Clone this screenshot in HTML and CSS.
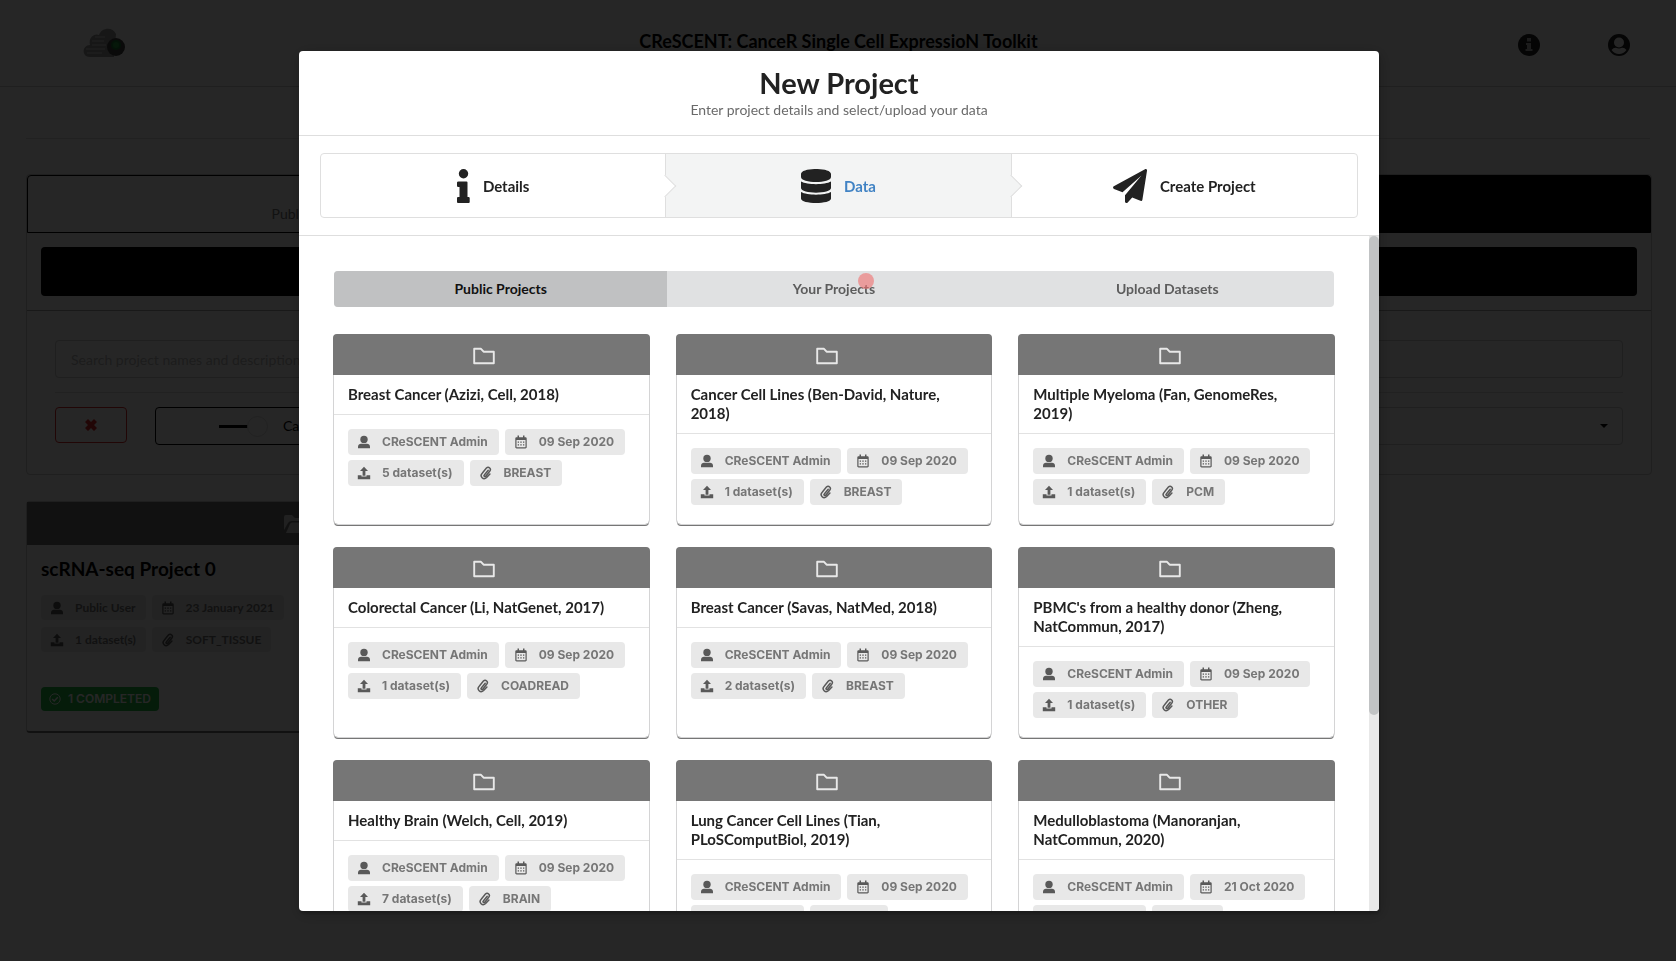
FILE: index.html
```html
<!DOCTYPE html>
<html lang="en">
<head>
<meta charset="utf-8">
<title>CReSCENT - New Project</title>
<link rel="stylesheet" href="styles.css">
</head>
<body>
<svg class="sprite" aria-hidden="true">
  <symbol id="i-user" viewBox="0 0 14 14"><circle cx="7" cy="4.4" r="3.7"/><path d="M1 13.2v-1.4C1 9.9 2.400 8.700 4 8.700h6c1.600 0 3 1.200 3 3.100v1.400z"/></symbol>
  <symbol id="i-cal" viewBox="0 0 14 14"><path fill-rule="evenodd" d="M3.500 .6h1.500v1.600h4V.6h1.500v1.600h.9c.7 0 1.300.5 1.300 1.200v8.900c0 .7-.6 1.200-1.300 1.200H2.600c-.7 0-1.300-.5-1.300-1.200V3.400c0-.7.6-1.200 1.300-1.200h.9zM2.500 5v7.300h9V5z"/><path d="M3.700 6.500H5v1.300H3.700zM6.300 6.500h1.400v1.300H6.300zM9 6.500h1.300v1.300H9zM3.700 9.200H5v1.300H3.700zM6.300 9.200h1.400v1.300H6.300zM9 9.200h1.300v1.300H9z"/></symbol>
  <symbol id="i-up" viewBox="0 0 14 14"><path d="M7 .8l4 4.300H8.400v4.700H5.600V5.100H3z"/><path d="M.8 9.300h3.700v1.300h5V9.300h3.700v4H.8z"/></symbol>
  <symbol id="i-clip" viewBox="0 0 14 14"><path fill="none" stroke="currentColor" stroke-width="1.500" stroke-linecap="round" d="M9.200 4.300L5.300 8.900c-.9 1 .4 2.300 1.400 1.300l4-4.900c2-2.300-1-5.400-3.300-3.300L3.200 7.200c-3 3.200 1.300 7.300 4.400 4.300l3.300-3.400"/></symbol>
  <symbol id="i-folder" viewBox="0 0 24 20"><path fill="none" stroke="currentColor" stroke-width="1.900" stroke-linejoin="round" d="M2.200 2.800h6.800l2.600 2.900h10.200v11.500H2.200z"/></symbol>
</svg>

<div class="page">
  <header class="topbar">
    <svg class="logo" viewBox="0 0 42 30" aria-hidden="true">
      <path fill="#999" d="M7 29C-2 29-1 17 7 17 5 9 12 5 16 7 19-1 30-1 33 6l-2 23z"/>
      <path fill="none" stroke="#ddd" d="M4 25h15M3 21h19M9 17h14M9 13h12M12 9h10"/>
      <circle cx="33" cy="19" r="9" fill="#444"/><circle cx="33" cy="17" r="5" fill="#1d7a35"/><circle cx="33" cy="17" r="3" fill="#2b9e48"/>
    </svg>
    <h1 class="brand">CReSCENT: CanceR Single Cell ExpressioN Toolkit</h1>
    <nav class="tools">
      <button class="tool" aria-label="About"><svg viewBox="0 0 22 22"><circle cx="11" cy="11" r="11"/><path fill="#bbb" d="M9 4h4v3.500H9zM8 9h5v6h1.500v2h-7v-2H9v-4H8z"/></svg></button>
      <button class="tool" aria-label="Account"><svg viewBox="0 0 22 22"><circle cx="11" cy="11" r="11"/><circle cx="11" cy="8.500" r="5" fill="#fff"/><path fill="#fff" d="M3.500 16q2-2.500 4.500-2.200 3 1.200 6 0 2.500-.3 4.500 2.200-3 4-7.500 4t-7.500-4z"/></svg></button>
    </nav>
  </header>
  <div class="strip"></div>
  <section class="panel">
    <div class="switch">
      <button class="half light">Public Projects</button>
      <button class="half dark">Your Projects</button>
    </div>
    <div class="block"><button class="create">Create New Project</button></div>
    <div class="filters">
      <input class="search" type="text" placeholder="Search project names and descriptions" aria-label="Search projects">
      <div class="row">
        <button class="clear" aria-label="Clear filters"><svg viewBox="0 0 12 12"><path d="M3 0l3 3 3-3 3 3-3 3 3 3-3 3-3-3-3 3-3-3 3-3-3-3z"/></svg></button>
        <button class="toggle"><span class="track"><span class="knob"></span></span>Cancer</button>
        <button class="pick" aria-label="Tissue"><span class="caret"></span></button>
      </div>
    </div>
  </section>
  <article class="own">
    <div class="own-top"><svg viewBox="0 0 24 18"><path d="M0 15V2q0-2 2-2h6l3 3h7q2 0 2 2v1H8q-3 0-4 2z"/><path d="M2 18l4-9q.6-1.500 2-1.500h16l-4 9q-.6 1.500-2 1.500z"/></svg></div>
    <div class="own-body">
      <h2 class="own-title">scRNA-seq Project 0</h2>
      <div class="own-tags">
        <span class="tag big"><svg><use href="#i-user"/></svg>Public User</span>
        <span class="tag big"><svg><use href="#i-cal"/></svg>23 January 2021</span>
        <span class="tag big"><svg><use href="#i-up"/></svg>1 dataset(s)</span>
        <span class="tag big"><svg><use href="#i-clip"/></svg>SOFT_TISSUE</span>
      </div>
      <span class="done"><svg viewBox="0 0 12 12"><g fill="none" stroke="currentColor"><circle cx="6" cy="6" r="5.200"/><path stroke-width="1.500" d="M3.200 6l2 2 3.600-3.800"/></g></svg>1 COMPLETED</span>
    </div>
  </article>
</div>

<div class="dimmer">
  <div class="modal" role="dialog" aria-labelledby="modal-title">
    <div class="modal-head">
      <h2 class="modal-title" id="modal-title">New Project</h2>
      <p class="modal-sub">Enter project details and select/upload your data</p>
    </div>
    <div class="steps-wrap">
      <div class="steps">
        <button class="step"><svg class="s-info" viewBox="0 0 13 34"><circle cx="6.500" cy="4.700" r="4.700"/><path d="M1.500 12.500h8q1 0 1 1V28h1q1.200 0 1.200 1v4q0 1-1 1H1q-1 0-1-1v-4q0-1 1-1h1.500V18H1.200Q0 18 0 17v-3.500q0-1 1.500-1z"/></svg>Details</button>
        <button class="step active"><svg class="s-data" viewBox="0 0 30 34"><path d="M0 5C0-1.700 30-1.700 30 5v3c0 6.700-30 6.700-30 0zM0 12.500c6 3.500 24 3.500 30 0V19c0 6.200-30 6.200-30 0zM0 23c6 3.500 24 3.500 30 0v6.500c0 6-30 6-30 0z"/></svg>Data</button>
        <button class="step"><svg class="s-plane" viewBox="0 0 34 34"><path d="M32 .3c1-.6 2.200.2 2 1.400l-4.600 29c-.2 1-1.100 1.500-2 1.100l-8.200-3.400-4.500 5c-1 1.100-2.700.4-2.700-1v-6.200L28.500 6.500 9.500 23.200 1 20c-1.200-.5-1.300-2.100-.2-2.800z"/></svg>Create Project</button>
      </div>
    </div>
    <div class="scroller">
      <div class="content">
        <div class="tabs">
          <button class="tab on">Public Projects</button>
          <button class="tab">Your Projects<span class="pointer"></span></button>
          <button class="tab">Upload Datasets</button>
        </div>
        <div class="cards" id="cards"></div>
      </div>
      <div class="bar"><div class="thumb"></div></div>
    </div>
  </div>
</div>
<script src="cards.js"></script>
</body>
</html>
```
FILE: styles.css
```css
* { box-sizing: border-box; }
html, body { height: 100%; }
body { margin: 0; font: 14px/20px Lato, sans-serif; color: #222; background: #fff; overflow: hidden; }
h1, h2, h3, p { margin: 0; }
button, input { font: inherit; color: inherit; margin: 0; padding: 0; border: 0; background: none; }
svg { fill: currentColor; flex: none; }
.sprite { position: absolute; width: 0; height: 0; }

.page { height: 100%; overflow: hidden; }
.topbar { display: grid; grid-template-columns: 1fr auto 1fr; align-items: center; height: 87px; padding: 0 46px 0 83px; border-bottom: 1px solid #ccc; }
.logo { width: 42px; height: 30px; }
.brand { font-size: 18px; line-height: 24px; color: #000; padding: 0 36px 4px 0; }
.tools { display: flex; justify-content: flex-end; gap: 68px; padding-top: 4px; }
.tool { width: 22px; height: 22px; }
.tool svg { display: block; width: 22px; height: 22px; }
.strip { height: 52px; margin: 0 26px; border-bottom: 1px solid #ddd; }
.panel { margin: 35px 24px 0 26px; border: 1px solid #ccc; border-radius: 4px; }
.switch { display: grid; grid-template-columns: 1fr 1fr; height: 58px; }
.half { padding-top: 20px; border: 1px solid #000; }
.light { padding-left: 30%; text-align: left; color: #777; border-radius: 4px 0 0 0; }
.dark { background: #000; color: #000; border-radius: 0 4px 0 0; }
.block { padding: 14px; border-bottom: 1px solid #aaa; }
.create { display: block; width: 100%; height: 49px; background: #000; border-radius: 4px; }
.filters { padding: 29px 28px; }
.search { display: block; width: 100%; height: 38px; padding: 0 15px; border: 1px solid #ccc; border-radius: 4px; }
.search::placeholder { color: #bbb; opacity: 1; }
.row { display: grid; grid-template-columns: 72px 2fr 3fr; gap: 28px; margin-top: 14px; padding-top: 14px; border-top: 1px solid #ddd; }
.clear { display: grid; place-items: center; height: 36px; border: 1px solid #db2828; border-radius: 4px; color: #db2828; }
.clear svg { width: 12px; height: 12px; }
.toggle { display: flex; align-items: center; gap: 35px; height: 38px; padding-left: 63px; border: 1px solid #000; border-radius: 4px; color: #000; }
.track { position: relative; width: 29px; height: 3px; background: #000; }
.knob { position: absolute; left: 28px; top: -9px; width: 21px; height: 21px; border: 1px solid #ddd; border-radius: 50%; background: #fff; }
.pick { display: flex; justify-content: flex-end; align-items: center; height: 38px; padding-right: 14px; border: 1px solid #ccc; border-radius: 4px; }
.caret { border: 4px solid transparent; border-top-color: #000; border-bottom: 0; }
.own { width: 531px; margin: 26px 0 0 26px; border: 1px solid #ccc; border-bottom: 2px solid #767676; border-radius: 4px; }
.own-top { display: grid; place-items: center; height: 43px; padding-left: 8px; background: #767676; color: #ddd; }
.own-top svg { width: 24px; height: 18px; }
.own-body { padding: 14px 14px 20px; }
.own-title { font-size: 19px; line-height: 20px; color: #000; font-weight: 700; }
.own-tags { display: flex; flex-wrap: wrap; gap: 7px 6px; width: 260px; margin: 16px 0 35px; }
.done { display: inline-flex; align-items: center; gap: 7px; height: 24px; padding: 0 8px; border-radius: 4px; background: #21ba45; color: #fff; font: 600 12px/24px Inter, sans-serif; }
.done svg { width: 12px; height: 12px; }

.dimmer { position: fixed; inset: 0; display: flex; align-items: center; justify-content: center; padding: 51px 0 50px 2px; background: rgba(0, 0, 0, .85); }
.modal { display: flex; flex-direction: column; width: 1080px; max-width: 95%; height: 100%; overflow: hidden; border-radius: 4px; background: #fff; box-shadow: 1px 3px 3px 0 rgba(0, 0, 0, .2), 1px 3px 15px 2px rgba(0, 0, 0, .2); }
.modal-head { padding: 16px 20px 16px; text-align: center; border-bottom: 1px solid #dedede; }
.modal-title { margin-bottom: 2px; font-size: 29px; line-height: 32px; }
.modal-sub { line-height: 18px; color: #6a6a6a; }
.steps-wrap { padding: 17px 21px; border-bottom: 1px solid #dedede; }
.steps { display: grid; grid-template-columns: repeat(3, 1fr); height: 65px; border: 1px solid #dfdfdf; border-radius: 4px; }
.step { position: relative; display: flex; align-items: center; justify-content: center; gap: 13px; font-size: 15px; font-weight: 700; border-right: 1px solid #dfdfdf; }
.step:last-child { border-right: 0; }
.step::after { content: ""; position: absolute; top: 50%; right: -8px; width: 15px; height: 15px; transform: translateY(-50%) rotate(-45deg); border: solid #dfdfdf; border-width: 0 1px 1px 0; background: #fff; z-index: 1; }
.step:last-child::after { display: none; }
.step.active, .step.active::after { background: #f3f4f4; }
.step.active { color: #4183c4; }
.step svg { fill: #222; height: 34px; }
.s-info { width: 13px; }
.s-data { width: 30px; }
.s-plane { width: 34px; }

.scroller { flex: 1; min-height: 0; display: flex; }
.content { flex: 1; min-width: 0; padding: 35px; overflow-y: auto; scrollbar-width: none; }
.bar { width: 10px; background: #e8e8e8; }
.thumb { height: 71%; border-radius: 5px; background: #c1c3c4; }
.tabs { display: grid; grid-template-columns: repeat(3, 1fr); border-radius: 4px; overflow: hidden; background: #e0e1e2; }
.tab { position: relative; height: 36px; font-weight: 700; color: #5c5c5c; }
.tab.on { background: #c0c1c2; color: #111; }
.pointer { position: absolute; left: 191px; top: 2px; width: 16px; height: 16px; border-radius: 50%; background: rgba(240, 110, 110, .6); }
.cards { display: grid; grid-template-columns: repeat(3, 1fr); gap: 24px 28px; margin-top: 28px; }
.card { border-radius: 4px; box-shadow: 0 0 0 1px #d4d4d5, 0 2px 0 0 #767676; }
.card-top { display: grid; place-items: center; height: 41px; margin: -1px -1px 0; padding: 2px 14px 0 0; border-radius: 4px 4px 0 0; background: #767676; color: #e8e8e8; }
.card-top svg { width: 24px; height: 20px; }
.card-title { padding: 10px 18px 10px 14px; font-size: 15px; line-height: 19px; font-weight: 700; border-bottom: 1px solid #e2e2e2; }
.tags { display: flex; flex-wrap: wrap; gap: 5px 6px; padding: 14px 14px 19px; }
.tag { display: flex; align-items: center; gap: 11px; height: 26px; padding: 0 11px 0 9px; border-radius: 4px; background: #e8e8e8; color: #767676; font: 700 12px/26px Inter, sans-serif; white-space: nowrap; }
.tag svg { width: 14px; height: 14px; color: #595959; }
.tag.big { height: 25px; padding-right: 10px; font: 700 12px/25px Lato, sans-serif; }
```
FILE: cards.js
```js
const projects = [
  ["Breast Cancer (Azizi, Cell, 2018)", "09 Sep 2020", 5, "BREAST"],
  ["Cancer Cell Lines (Ben-David, Nature, 2018)", "09 Sep 2020", 1, "BREAST"],
  ["Multiple Myeloma (Fan, GenomeRes, 2019)", "09 Sep 2020", 1, "PCM"],
  ["Colorectal Cancer (Li, NatGenet, 2017)", "09 Sep 2020", 1, "COADREAD"],
  ["Breast Cancer (Savas, NatMed, 2018)", "09 Sep 2020", 2, "BREAST"],
  ["PBMC's from a healthy donor (Zheng, NatCommun, 2017)", "09 Sep 2020", 1, "OTHER"],
  ["Healthy Brain (Welch, Cell, 2019)", "09 Sep 2020", 7, "BRAIN"],
  ["Lung Cancer Cell Lines (Tian, PLoSComputBiol, 2019)", "09 Sep 2020", 1, "LUNG"],
  ["Medulloblastoma (Manoranjan, NatCommun, 2020)", "21 Oct 2020", 1, "MBL"]
];
const tag = (icon, text) => `<span class="tag"><svg><use href="#i-${icon}"/></svg>${text}</span>`;
document.getElementById("cards").innerHTML = projects.map(([title, date, count, tissue]) => `
  <article class="card">
    <div class="card-top"><svg><use href="#i-folder"/></svg></div>
    <h3 class="card-title">${title}</h3>
    <div class="tags">${tag("user", "CReSCENT Admin")}${tag("cal", date)}${tag("up", count + " dataset(s)")}${tag("clip", tissue)}</div>
  </article>`).join("");
```
